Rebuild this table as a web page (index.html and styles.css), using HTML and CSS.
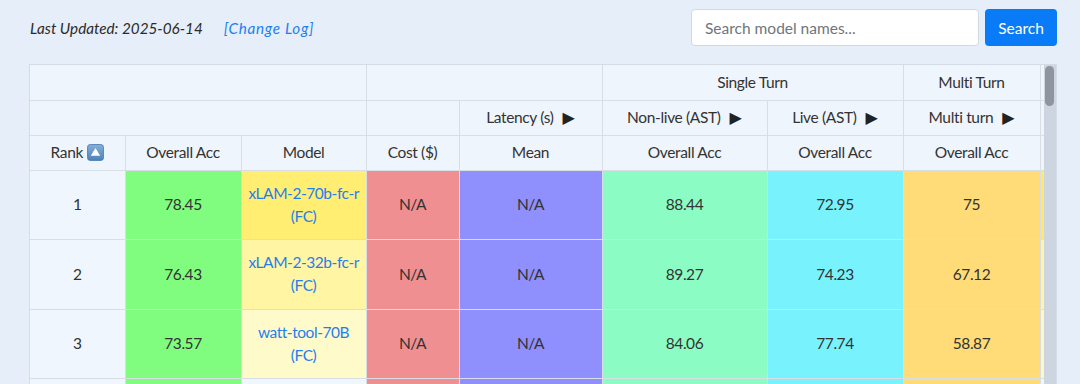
FILE: index.html
```html
<!DOCTYPE html>
<html lang="en">
<head>
<meta charset="utf-8">
<title>Leaderboard</title>
<link rel="stylesheet" href="styles.css">
</head>
<body>
<div class="page">
  <div class="topbar">
    <div class="meta">
      <span class="updated">Last Updated: 2025-06-14</span>
      <a class="changelog" href="#">[Change Log]</a>
    </div>
    <form class="search" onsubmit="return false">
      <input class="search-input" type="text" placeholder="Search model names...">
      <button class="search-btn" type="submit">Search</button>
    </form>
  </div>

  <div class="table-wrap">
    <table class="board">
      <colgroup>
        <col class="c-rank"><col class="c-overall"><col class="c-model"><col class="c-cost">
        <col class="c-mean"><col class="c-nonlive"><col class="c-live"><col class="c-multi"><col class="c-next">
      </colgroup>
      <thead>
        <tr>
          <th colspan="3"></th>
          <th colspan="2"></th>
          <th colspan="2">Single Turn</th>
          <th>Multi Turn</th>
          <th></th>
        </tr>
        <tr>
          <th colspan="3"></th>
          <th></th>
          <th>Latency (s)<span class="tri">&#9654;</span></th>
          <th>Non-live (AST)<span class="tri">&#9654;</span></th>
          <th>Live (AST)<span class="tri">&#9654;</span></th>
          <th>Multi turn<span class="tri">&#9654;</span></th>
          <th></th>
        </tr>
        <tr>
          <th>Rank<svg class="sort-icon" viewBox="0 0 16 16" width="17" height="17" aria-hidden="true"><defs><linearGradient id="sg" x1="0" y1="0" x2="0" y2="1"><stop offset="0" stop-color="#86b0d9"/><stop offset="1" stop-color="#4d82b8"/></linearGradient></defs><rect x="0.5" y="0.5" width="15" height="15" rx="2.5" fill="url(#sg)" stroke="#4a7db0" stroke-width="0.8"/><path d="M8 3.8 L12.4 11 H3.6 Z" fill="#ffffff"/></svg></th>
          <th>Overall Acc</th>
          <th>Model</th>
          <th>Cost ($)</th>
          <th>Mean</th>
          <th>Overall Acc</th>
          <th>Overall Acc</th>
          <th>Overall Acc</th>
          <th></th>
        </tr>
      </thead>
      <tbody>
        <tr>
          <td class="rank">1</td>
          <td class="overall">78.45</td>
          <td class="model m1"><a href="#"><span class="name">xLAM-2-70b-fc-r</span> <span class="name">(FC)</span></a></td>
          <td class="cost">N/A</td>
          <td class="mean">N/A</td>
          <td class="nonlive">88.44</td>
          <td class="live">72.95</td>
          <td class="multi">75</td>
          <td class="next n1"></td>
        </tr>
        <tr>
          <td class="rank">2</td>
          <td class="overall">76.43</td>
          <td class="model m2"><a href="#"><span class="name">xLAM-2-32b-fc-r</span> <span class="name">(FC)</span></a></td>
          <td class="cost">N/A</td>
          <td class="mean">N/A</td>
          <td class="nonlive">89.27</td>
          <td class="live">74.23</td>
          <td class="multi">67.12</td>
          <td class="next n2"></td>
        </tr>
        <tr>
          <td class="rank">3</td>
          <td class="overall">73.57</td>
          <td class="model m3"><a href="#"><span class="name">watt-tool-70B</span> <span class="name">(FC)</span></a></td>
          <td class="cost">N/A</td>
          <td class="mean">N/A</td>
          <td class="nonlive">84.06</td>
          <td class="live">77.74</td>
          <td class="multi">58.87</td>
          <td class="next n3"></td>
        </tr>
        <tr>
          <td class="rank">4</td>
          <td class="overall">72.08</td>
          <td class="model"><a href="#"><span class="name">ToolACE-2-8B</span> <span class="name">(FC)</span></a></td>
          <td class="cost">N/A</td>
          <td class="mean">N/A</td>
          <td class="nonlive">87.56</td>
          <td class="live">76.10</td>
          <td class="multi">44.12</td>
          <td class="next"></td>
        </tr>
      </tbody>
    </table>
    <div class="scrollbar" aria-hidden="true"><div class="thumb"></div></div>
  </div>
</div>
</body>
</html>
```

FILE: styles.css
```css
* { box-sizing: border-box; }

html, body {
  margin: 0;
  padding: 0;
  background: #e5eef9;
  font-family: Lato, "Open Sans", sans-serif;
  color: #333333;
}

.page {
  padding: 9px 23px 0 29px;
}

.topbar {
  display: flex;
  align-items: center;
  justify-content: space-between;
  height: 37px;
}

.meta {
  display: flex;
  align-items: center;
  gap: 21px;
  font-style: italic;
  font-size: 15.25px;
  padding-left: 1px;
}

.updated { color: #2b2b2b; }

.changelog {
  color: #1f7ff0;
  text-decoration: none;
  letter-spacing: 0.7px;
}

.search {
  display: flex;
  gap: 6px;
  margin: 0;
}

.search-input {
  width: 288px;
  height: 37px;
  padding: 0 13px;
  border: 1px solid #d3d9e1;
  border-radius: 4px;
  background: #ffffff;
  font-family: inherit;
  font-size: 15.5px;
  color: #333;
  outline: none;
}

.search-input::placeholder { color: #6f757c; }

.search-btn {
  width: 72px;
  height: 37px;
  border: none;
  border-radius: 4px;
  background: #0a7bf6;
  color: #ffffff;
  font-family: inherit;
  font-size: 15.5px;
  padding: 0;
}

.table-wrap {
  position: relative;
  margin-top: 18px;
  height: 340px;
  border: 1px solid #d6dce5;
  overflow: hidden;
  background: #eff5fd;
}

.board {
  table-layout: fixed;
  width: 1211px;
  border-collapse: collapse;
  border-style: hidden;
  font-size: 15.5px;
  line-height: 23px;
  letter-spacing: -0.35px;
}

.c-rank { width: 95px; }
.c-overall { width: 116px; }
.c-model { width: 125px; }
.c-cost { width: 93px; }
.c-mean { width: 143px; }
.c-nonlive { width: 165px; }
.c-live { width: 136px; }
.c-multi { width: 137px; }
.c-next { width: 201px; }

.board th,
.board td {
  border: 1px solid #d9dee5;
  text-align: center;
  vertical-align: middle;
  font-weight: 400;
  color: #333333;
}

.board th {
  background: #eff5fd;
  padding: 5.5px 8px;
  height: 35px;
  white-space: nowrap;
}

.board td {
  padding: 11px 6px;
  line-height: 23.25px;
  letter-spacing: -0.45px;
}

.name { white-space: nowrap; }

.tri {
  font-family: "DejaVu Sans", sans-serif;
  font-size: 16px;
  margin-left: 9px;
  letter-spacing: 0;
  color: #222;
}

.sort-icon {
  vertical-align: -3px;
  margin-left: 4px;
}

.rank { background: #f0f6fe; }
.overall { background: #80fd7e; }
.model { background: #f0f6fe; }
.model a { color: #1f7ff0; text-decoration: none; }
.m1 { background: #ffee72; }
.m2 { background: #fff5a3; }
.m3 { background: #fffaca; }
.cost { background: #f08f91; }
.mean { background: #8f8ffd; }
.nonlive { background: #8bfdc4; }
.live { background: #78f3fe; }
.multi { background: #ffdc77; }
.next { background: #f0f6fe; }
.n1 { background: #ffe96b; }
.n2 { background: #fff5a8; }
.n3 { background: #fff8c4; }

.scrollbar {
  position: absolute;
  top: 0;
  right: 0;
  bottom: 0;
  width: 12px;
  background: #cdd5e1;
}

.thumb {
  margin: 1px 0 0 1px;
  width: 9px;
  height: 40px;
  border-radius: 5px;
  background: #8e959f;
}
```
